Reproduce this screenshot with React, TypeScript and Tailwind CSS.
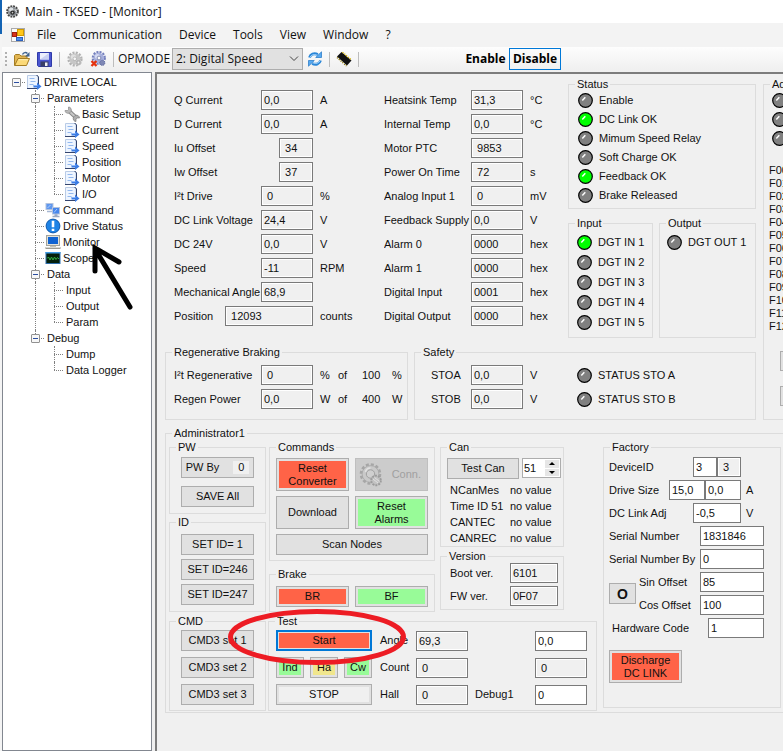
import React, { useId } from "react";
import clsx from "clsx";

/* ---------- Icons ---------- */

const GearIcon = () => (
  <svg viewBox="0 0 16 16" className="h-4 w-4" aria-hidden="true">
    <circle cx="8" cy="8" r="6.300" fill="none" stroke="#b2b2b2" strokeWidth="2.600" strokeDasharray="2 1.300" />
    <circle cx="8" cy="8" r="5.600" fill="#c6c6c6" />
    <circle cx="6.500" cy="6" r="2.600" fill="#e0e0e0" />
    <circle cx="7.800" cy="7.800" r="1.800" fill="#f6f6f6" stroke="#a8a8a8" strokeWidth="0.700" />
    <circle cx="11.500" cy="11.500" r="2.800" fill="#b4b4b4" stroke="#d8d8d8" strokeWidth="0.800" strokeDasharray="1.200 0.800" />
    <circle cx="11.500" cy="11.500" r="0.900" fill="#eee" />
  </svg>
);

const GearOffIcon = () => (
  <svg viewBox="0 0 16 16" className="h-4 w-4" aria-hidden="true">
    <circle cx="8.800" cy="7" r="5.900" fill="none" stroke="#7580bd" strokeWidth="2.400" strokeDasharray="2 1.090" />
    <circle cx="8.800" cy="7" r="5.200" fill="#a6afdc" />
    <circle cx="7.500" cy="5.500" r="2.600" fill="#d5daf2" />
    <circle cx="9" cy="7" r="1.900" fill="#fafafa" stroke="#5c6698" strokeWidth="0.700" />
    <circle cx="12.300" cy="11.800" r="2.600" fill="#7f88b5" stroke="#4f5a93" strokeWidth="0.800" strokeDasharray="1.200 0.800" />
    <path d="M1.500 10l5 5M6.500 10l-5 5" stroke="#e5320e" strokeWidth="2.300" />
  </svg>
);

const ConnGearIcon = () => (
  <svg viewBox="0 0 24 24" className="h-6 w-6" aria-hidden="true">
    <circle cx="11.500" cy="11" r="9.300" fill="none" stroke="#a6a6a6" strokeWidth="3" strokeDasharray="2.900 1.970" />
    <circle cx="11.500" cy="11" r="8.400" fill="#c9c9c9" stroke="#a6a6a6" strokeWidth="0.800" />
    <circle cx="11.500" cy="11" r="4.200" fill="#cfcfcf" stroke="#a0a0a0" />
    <path d="M6.500 9a5 5 0 0 1 5-4" fill="none" stroke="#e2e2e2" strokeWidth="1.500" />
    <circle cx="17" cy="17.500" r="4.800" fill="#c2c2c2" stroke="#9c9c9c" strokeWidth="2" strokeDasharray="2 1" />
    <path d="M14 16l5 4M15.500 14.500l5 4" stroke="#e0e0e0" />
  </svg>
);

const AppIcon = () => (
  <svg viewBox="0 0 14 14" className="h-[13px] w-[13px]" aria-hidden="true">
    <circle cx="7" cy="7" r="5.600" fill="none" stroke="#444" strokeWidth="2.400" strokeDasharray="2 0.930" />
    <circle cx="7" cy="7" r="5" fill="#8a8f94" />
    <circle cx="5.600" cy="5" r="2.400" fill="#dde1e4" />
    <circle cx="7" cy="8.200" r="2.400" fill="#2a2a2a" />
    <circle cx="7" cy="8.200" r="0.900" fill="#ccc" />
    <path d="M9.500 4.500l2 3" stroke="#e8e8e8" />
  </svg>
);

const FormIcon = () => (
  <svg viewBox="0 0 14 14" className="h-[14px] w-[14px]" aria-hidden="true">
    <rect x="0.500" y="0.500" width="13" height="13" fill="#fafafa" stroke="#a9a9a9" />
    <rect x="6.500" y="1.500" width="6" height="6" fill="#ffc61a" stroke="#d19a00" />
    <rect x="1.500" y="4.500" width="4" height="4" fill="#d8321c" stroke="#9e1f0e" />
    <rect x="5.500" y="9.500" width="6" height="3" fill="#4d8dea" stroke="#2a60bd" />
  </svg>
);

const FolderIcon = () => (
  <svg viewBox="0 0 16 16" className="h-4 w-4" aria-hidden="true">
    <path d="M0.500 14.500V4.500l1-1h4l1.500 1.500h6V8" fill="#e2b552" stroke="#a47c22" />
    <path d="M0.700 14.500L4 7.500h11.500L12.500 14.500z" fill="#fbd978" stroke="#a47c22" />
    <path d="M4.800 8.700h9" stroke="#fff0b8" />
    <path d="M8.500 3.500C9.500 1.200 12 1 13.500 2.500" fill="none" stroke="#3f6390" strokeWidth="1.400" />
    <path d="M15.500 1v4.500h-4.500z" fill="#3f6390" />
  </svg>
);

const SaveIcon = () => (
  <svg viewBox="0 0 15 15" className="h-[15px] w-[15px]" aria-hidden="true">
    <path d="M0.500 0.500h14v14h-13l-1-1z" fill="#4a55cf" stroke="#2f3aa8" />
    <rect x="3" y="1" width="9" height="6.500" fill="#eceffc" />
    <path d="M3 7.500L12 1v6.500z" fill="#c9d0f2" />
    <rect x="3.500" y="9.500" width="8" height="5" fill="#3a3f66" />
    <rect x="8" y="10.500" width="2.500" height="3.500" fill="#f0f0f5" />
  </svg>
);

const RefreshIcon = () => (
  <svg viewBox="0 0 16 16" className="h-4 w-4" aria-hidden="true">
    <path d="M2.500 6.500C3.300 3.400 7 1.600 10.800 3.600" fill="none" stroke="#2b87d8" strokeWidth="2.800" />
    <path d="M14.500 0.800v5.700H8.700z" fill="#57aaf2" stroke="#1f74c4" strokeWidth="0.700" />
    <path d="M13.500 9.500C12.700 12.600 9 14.400 5.200 12.400" fill="none" stroke="#2b87d8" strokeWidth="2.800" />
    <path d="M1.500 15.200V9.500h5.800z" fill="#57aaf2" stroke="#1f74c4" strokeWidth="0.700" />
    <path d="M3.200 6C4.200 3.900 7 3 9.800 4M12.800 10c-1 2.100-3.800 3-6.600 2" fill="none" stroke="#b4dcff" strokeWidth="0.900" />
  </svg>
);

const ChipIcon = () => (
  <svg viewBox="0 0 16 16" className="h-4 w-4" aria-hidden="true">
    <path d="M1 5.500L5.500 1l10 8.500L11 14.500z" fill="#111" />
    <path d="M6.500 1.200l9 7.800" stroke="#d8b400" strokeWidth="1.400" strokeDasharray="1.200 1.200" />
    <path d="M1 6.500l9.500 8.500" stroke="#8f7a10" strokeWidth="1.400" strokeDasharray="1.200 1.200" />
  </svg>
);

const PageIcon = () => (
  <svg viewBox="0 0 16 16" className="h-4 w-4" aria-hidden="true">
    <path d="M1.500 1.500h9l1.500 1.500v11.500h-10.500z" fill="#eef5ff" stroke="#b9cbe6" />
    <path d="M10.500 1.500h1l1 1.500v11" fill="none" stroke="#33446e" />
    <path d="M1 14.500h11" stroke="#33446e" />
    <path d="M3.500 4.500h5M4.500 7.500h5M3.500 10.500h4" stroke="#93b8ee" />
    <path d="M7.500 11h3.500V8.500l4.500 4-4.500 3.500v-2.500h-3.500z" fill="#3c7ce4" />
    <path d="M8 11.500h3.500" stroke="#8db8fa" />
  </svg>
);

const WrenchIcon = () => (
  <svg viewBox="0 0 16 16" className="h-4 w-4" aria-hidden="true">
    <path d="M5 5l7 6.500" stroke="#8a8a8a" strokeWidth="4" />
    <path d="M5 5l7 6.500" stroke="#c8c8c8" strokeWidth="2" />
    <path d="M1 4.500c0 2 2 3.500 4.500 2.500L7 5.500C8 3 6.500 1 4.500 1v2.500L3.500 4.500z" fill="#b9b9b9" stroke="#8a8a8a" strokeWidth="0.700" />
    <path d="M15.500 12c0-2-2-3.500-4.500-2.500l-1.500 1.500c-1 2.500 .5 4.500 2.500 4.500v-2.500l1-1z" fill="#adadad" stroke="#7d7d7d" strokeWidth="0.700" />
  </svg>
);

const NetworkIcon = () => (
  <svg viewBox="0 0 16 16" className="h-4 w-4" aria-hidden="true">
    <rect x="1" y="1.500" width="7" height="6" fill="#5f97ee" stroke="#b3c3de" />
    <path d="M2 9.500h5" stroke="#a7b7d2" strokeWidth="1.500" />
    <rect x="7.500" y="5.500" width="7" height="6.500" fill="#4686ec" stroke="#b3c3de" />
    <path d="M9.500 13h3M7.500 14.500h7" stroke="#9aa9c4" strokeWidth="1.500" />
    <path d="M2.500 6l3-3M9 10.500l3-3.500" stroke="#a9cbff" />
  </svg>
);

const StatusIcon = () => (
  <svg viewBox="0 0 16 16" className="h-4 w-4" aria-hidden="true">
    <circle cx="8" cy="8" r="6.900" fill="#1e83e6" stroke="#1059ad" />
    <path d="M6.700 2.800h2.600v6.400H6.700zM6.700 10.800h2.600v2.300H6.700z" fill="#fff" />
  </svg>
);

const MonitorIcon = () => (
  <svg viewBox="0 0 16 16" className="h-4 w-4" aria-hidden="true">
    <rect x="1.500" y="1.500" width="13" height="10" fill="#e2e2da" stroke="#a3a39b" />
    <rect x="3" y="3" width="10" height="7" fill="#0f63d2" />
    <path d="M5 12.500h6" stroke="#c2c2ba" />
    <path d="M0.500 14h15" stroke="#9b9b94" strokeWidth="2" />
    <path d="M1 13.500h14" stroke="#d9d9d2" />
  </svg>
);

const ScopeIcon = () => (
  <svg viewBox="0 0 16 16" className="h-4 w-4" aria-hidden="true">
    <rect x="1" y="2.500" width="14" height="11" fill="#04200c" stroke="#2f6fae" />
    <rect x="0.500" y="2" width="15" height="1.500" fill="#3f9be6" />
    <path d="M2 8.500l1.500-1.500 1.500 3 1.500-3 1.500 3 1.500-3 1.500 2.500 1.500-2 1.500 1.500" fill="none" stroke="#2fae42" />
  </svg>
);

const Led = ({ on = false }: { on?: boolean }) => (
  <svg viewBox="0 0 15 15" className="h-[15px] w-[15px] shrink-0" aria-hidden="true">
    <circle cx="7.500" cy="7.500" r="6.800" fill={on ? "#00ff00" : "#808080"} stroke="#000" strokeWidth="1.200" />
    <path d="M4.300 7.500l3-3.200" stroke="#fff" strokeWidth="1.500" />
  </svg>
);

/* ---------- Building blocks ---------- */

type GroupProps = { title: string; className?: string; body?: string; children?: React.ReactNode };

const Group = ({ title, className, body, children }: GroupProps) => (
  <fieldset className={clsx("min-w-0 border border-[#dcdcdc]", className)}>
    <legend className="ml-1.5 px-0.5 leading-[14px] whitespace-nowrap">{title}</legend>
    <div className={body}>{children}</div>
  </fieldset>
);

type BoxProps = { id?: string; value: string; className?: string; editable?: boolean; label?: string };

const Box = ({ id, value, className = "w-[52px]", editable = false, label }: BoxProps) => (
  <input
    id={id}
    aria-label={label}
    defaultValue={value}
    readOnly={!editable}
    className={clsx(
      "h-5 shrink-0 border border-[#7a7a7a] px-0.5 outline-none shadow-[inset_0_0_0_1px_#fff]",
      editable ? "bg-white" : "bg-[#f0f0f0]",
      className
    )}
  />
);

type BtnProps = { children?: React.ReactNode; className?: string; fill?: string; focused?: boolean };

const Btn = ({ children, className = "h-[21px]", fill, focused = false }: BtnProps) => (
  <button
    type="button"
    className={clsx(
      "flex items-stretch bg-[#e1e1e1] leading-[13px]",
      focused ? "border-2 border-[#0078d7] p-px" : "border border-[#adadad] p-0.5",
      className
    )}
  >
    <span className={clsx("flex flex-1 items-center justify-center whitespace-nowrap", fill)}>{children}</span>
  </button>
);

type Reading = { label: string; value: string; unit?: string; box?: string };

const ReadingRow = ({ label, value, unit, box }: Reading) => {
  const id = useId();
  return (
    <div className="flex h-6 items-center">
      <div className="flex w-[139px] items-center">
        <label htmlFor={id} className="flex-1 overflow-hidden whitespace-nowrap">{label}</label>
        <Box id={id} value={value} className={box} />
      </div>
      <span className="ml-[7px]">{unit}</span>
    </div>
  );
};

const LedRow = ({ label, on, className = "h-5" }: { label?: string; on?: boolean; className?: string }) => (
  <div className={clsx("flex items-center gap-1.5 whitespace-nowrap", className)}>
    <Led on={on} />
    <span>{label}</span>
  </div>
);

/* ---------- Data ---------- */

const motorReadings: Reading[] = [
  { label: "Q Current", value: "0,0", unit: "A" },
  { label: "D Current", value: "0,0", unit: "A" },
  { label: "Iu Offset", value: " 34", box: "w-[34px]" },
  { label: "Iw Offset", value: " 37", box: "w-[34px]" },
  { label: "I²t Drive", value: " 0", unit: "%" },
  { label: "DC Link Voltage", value: "24,4", unit: "V" },
  { label: "DC 24V", value: "0,0", unit: "V" },
  { label: "Speed", value: "-11", unit: "RPM" },
  { label: "Mechanical Angle", value: "68,9" },
  { label: "Position", value: " 12093", unit: "counts", box: "w-[88px]" },
];

const systemReadings: Reading[] = [
  { label: "Heatsink Temp", value: "31,3", unit: "°C" },
  { label: "Internal Temp", value: "0,0", unit: "°C" },
  { label: "Motor PTC", value: " 9853" },
  { label: "Power On Time", value: " 72", unit: "s" },
  { label: "Analog Input 1", value: " 0", unit: "mV" },
  { label: "Feedback Supply V", value: "0,0", unit: "V" },
  { label: "Alarm 0", value: "0000", unit: "hex" },
  { label: "Alarm 1", value: "0000", unit: "hex" },
  { label: "Digital Input", value: "0001", unit: "hex" },
  { label: "Digital Output", value: "0000", unit: "hex" },
];

const statusLeds = [
  { label: "Enable", on: false },
  { label: "DC Link OK", on: true },
  { label: "Mimum Speed Relay", on: false },
  { label: "Soft Charge OK", on: false },
  { label: "Feedback OK", on: true },
  { label: "Brake Released", on: false },
];

const faults = ["F00", "F01", "F02", "F03", "F04", "F05", "F06", "F07", "F08", "F09", "F10", "F11", "F12"];

type TreeNode = { text: string; guides: string; icon?: React.ReactNode };

// One guide character per level: "|" line, "+" branch, "L" last branch,
// "-" toggle, "e" last toggle, "r" root toggle
const tree: TreeNode[] = [
  { text: "DRIVE LOCAL", guides: "r", icon: <PageIcon /> },
  { text: "Parameters", guides: " -" },
  { text: "Basic Setup", guides: " |+", icon: <WrenchIcon /> },
  { text: "Current", guides: " |+", icon: <PageIcon /> },
  { text: "Speed", guides: " |+", icon: <PageIcon /> },
  { text: "Position", guides: " |+", icon: <PageIcon /> },
  { text: "Motor", guides: " |+", icon: <PageIcon /> },
  { text: "I/O", guides: " |L", icon: <PageIcon /> },
  { text: "Command", guides: " +", icon: <NetworkIcon /> },
  { text: "Drive Status", guides: " +", icon: <StatusIcon /> },
  { text: "Monitor", guides: " +", icon: <MonitorIcon /> },
  { text: "Scope", guides: " +", icon: <ScopeIcon /> },
  { text: "Data", guides: " -" },
  { text: "Input", guides: " |+" },
  { text: "Output", guides: " |+" },
  { text: "Param", guides: " |L" },
  { text: "Debug", guides: " e" },
  { text: "Dump", guides: "  +" },
  { text: "Data Logger", guides: "  L" },
];

/* ---------- Tree ---------- */

const Guide = ({ kind }: { kind: string }) => {
  const toggle = kind === "-" || kind === "e" || kind === "r";
  const through = kind === "|" || kind === "+" || kind === "-";
  const half = kind === "L" || kind === "e";
  return (
    <span className="relative h-4 w-[19px] shrink-0">
      {through && <span className="absolute left-[9px] top-0 h-4 border-l border-dotted border-[#808080]" />}
      {half && <span className="absolute left-[9px] top-0 h-2 border-l border-dotted border-[#808080]" />}
      {kind !== "|" && kind !== " " && (
        <span className="absolute left-[9px] top-2 w-[9px] border-t border-dotted border-[#808080]" />
      )}
      {toggle && (
        <button type="button" aria-label="Collapse" className="absolute left-[5px] top-1 flex h-[9px] w-[9px] items-center justify-center rounded-[1px] border border-[#919191] bg-[#f7f7f7]">
          <span className="h-px w-[5px] bg-[#2b4ea0]" />
        </button>
      )}
    </span>
  );
};

const TreeView = () => (
  <nav className="w-[150px] shrink-0 border border-[#828790] bg-white pt-px pl-1">
    <ul>
      {tree.map((node) => (
        <li key={node.text} className="flex h-4 items-center leading-4 whitespace-nowrap">
          {node.guides.split("").map((kind, i) => (
            <Guide key={i} kind={kind} />
          ))}
          {node.icon}
          <span className="ml-0.5">{node.text}</span>
        </li>
      ))}
    </ul>
  </nav>
);

/* ---------- Header ---------- */

const Separator = () => <span className="h-[15px] w-px bg-[#bdbdbd]" />;

const Header = () => (
  <header className="font-['Open_Sans','Noto_Sans',sans-serif] text-xs text-[#111]">
    <div className="flex h-[23px] items-center gap-1.5 bg-white pl-1">
      <AppIcon />
      <span>Main - TKSED - [Monitor]</span>
    </div>
    <nav className="flex h-6 items-center gap-3 bg-[#f3f3f3] pl-[9px]">
      <FormIcon />
      <div className="flex items-center gap-[17px]">
        {["File", "Communication", "Device", "Tools", "View", "Window", "?"].map((item) => (
          <button type="button" key={item}>{item}</button>
        ))}
      </div>
    </nav>
    <div className="flex h-6 items-center bg-gradient-to-b from-[#fdfdfd] to-[#efefef] pl-[3px]">
      <span className="mr-[7px] h-[14px] border-l-2 border-dotted border-[#b0b0b0]" />
      <div className="flex items-center gap-[7px]">
        <button type="button" aria-label="Open"><FolderIcon /></button>
        <button type="button" aria-label="Save"><SaveIcon /></button>
        <Separator />
        <button type="button" aria-label="Connect"><GearIcon /></button>
        <button type="button" aria-label="Disconnect"><GearOffIcon /></button>
        <Separator />
      </div>
      <label htmlFor="opmode" className="ml-1 w-[54px]">OPMODE</label>
      <div className="relative">
        <select id="opmode" className="h-[22px] w-[131px] appearance-none border border-[#adadad] bg-[#e1e1e1] pl-[3px]">
          <option>2: Digital Speed</option>
        </select>
        <svg viewBox="0 0 10 6" className="pointer-events-none absolute top-2 right-1 h-1.5 w-2.5" aria-hidden="true">
          <path d="M1 0.500l4 4 4-4" fill="none" stroke="#444" />
        </svg>
      </div>
      <div className="ml-1 flex items-center gap-1.5">
        <button type="button" aria-label="Refresh"><RefreshIcon /></button>
        <Separator />
        <button type="button" aria-label="Firmware"><ChipIcon /></button>
        <Separator />
      </div>
      <div className="ml-[103px] flex items-center font-bold text-black">
        <button type="button" className="h-[22px] w-[47px] text-center">Enable</button>
        <button type="button" className="h-[22px] w-[52px] border border-[#0078d7] text-center">Disable</button>
      </div>
    </div>
  </header>
);

/* ---------- Monitor groups ---------- */

const Braking = () => (
  <Group title="Regenerative Braking" className="w-[243px]" body="pt-1 pr-1 pb-2 pl-2">
    {[
      { label: "I²t Regenerative", value: " 0", unit: "%", max: "100" },
      { label: "Regen Power", value: "0,0", unit: "W", max: "400" },
    ].map((r) => (
      <div key={r.label} className="flex items-center">
        <div className="w-[164px]"><ReadingRow label={r.label} value={r.value} unit={r.unit} /></div>
        <span className="w-6">of</span>
        <span className="w-[30px]">{r.max}</span>
        <span>{r.unit}</span>
      </div>
    ))}
  </Group>
);

const Safety = () => (
  <Group title="Safety" className="flex-1" body="pt-1 pb-2 pl-4">
    {["A", "B"].map((ch) => (
      <div key={ch} className="flex h-6 items-center">
        <label htmlFor={"sto" + ch} className="w-10">STO{ch}</label>
        <Box id={"sto" + ch} value="0,0" />
        <span className="ml-[7px] w-[47px]">V</span>
        <LedRow label={"STATUS STO " + ch} />
      </div>
    ))}
  </Group>
);

const NodeSpinner = () => (
  <div className="flex h-5 w-[39px] border border-[#adadad] bg-white p-px">
    <input aria-label="Node" defaultValue="51" className="min-w-0 flex-1 outline-none" />
    <div className="flex w-[14px] flex-col gap-px">
      <button type="button" aria-label="Up" className="flex flex-1 items-center justify-center bg-[#e6e6e6]">
        <svg viewBox="0 0 6 3" className="h-[3px] w-1.5"><path d="M0 3l3-3 3 3z" /></svg>
      </button>
      <button type="button" aria-label="Down" className="flex flex-1 items-center justify-center bg-[#e6e6e6]">
        <svg viewBox="0 0 6 3" className="h-[3px] w-1.5"><path d="M0 0l3 3 3-3z" /></svg>
      </button>
    </div>
  </div>
);

const Factory = () => (
  <Group title="Factory" className="w-[178px]" body="pt-[3px] pr-4 pb-6 pl-[5px]">
    <div className="flex flex-col gap-[3px] whitespace-nowrap">
      <div className="flex items-center">
        <label htmlFor="device" className="w-[84px]">DeviceID</label>
        <Box id="device" value="3" editable className="w-6" />
        <Box value=" 3" className="w-6" label="DeviceID read" />
      </div>
      <div className="flex items-center">
        <label htmlFor="size" className="w-[60px]">Drive Size</label>
        <Box id="size" value="15,0" editable className="w-9" />
        <Box value="0,0" editable className="w-9" label="Drive Size limit" />
        <span className="ml-[5px]">A</span>
      </div>
      <div className="flex items-center">
        <label htmlFor="adj" className="w-[84px]">DC Link Adj</label>
        <Box id="adj" value="-0,5" editable className="w-12" />
        <span className="ml-[5px]">V</span>
      </div>
      <div className="flex items-center justify-between">
        <label htmlFor="sn">Serial Number</label>
        <Box id="sn" value="1831846" editable className="w-16" />
      </div>
      <div className="flex items-center justify-between">
        <label htmlFor="snby">Serial Number By</label>
        <Box id="snby" value="0" editable className="w-16" />
      </div>
      <div className="flex items-center gap-[3px]">
        <button type="button" className="h-[21px] w-[27px] border border-[#adadad] bg-[#e1e1e1] text-center text-sm leading-[18px] font-bold">O</button>
        <div className="flex flex-1 flex-col gap-[3px]">
          <div className="flex items-center justify-between">
            <label htmlFor="sin">Sin Offset</label>
            <Box id="sin" value="85" editable className="w-16" />
          </div>
          <div className="flex items-center justify-between">
            <label htmlFor="cos">Cos Offset</label>
            <Box id="cos" value="100" editable className="w-16" />
          </div>
        </div>
      </div>
      <div className="flex items-center justify-between pl-[3px]">
        <label htmlFor="hw">Hardware Code</label>
        <Box id="hw" value="1" editable className="w-14" />
      </div>
    </div>
    <Btn className="mt-3 h-[33px] w-[73px]" fill="bg-[#ff6347]">Discharge<br />DC LINK</Btn>
  </Group>
);

const Administrator = () => (
  <Group title="Administrator1" className="mt-1.5" body="flex items-start gap-1.5 pb-px pl-[3px]">
    <div className="flex w-[428px] flex-col gap-0.5">
      <div className="flex items-start">
        <div className="flex w-[97px] flex-col gap-px">
          <Group title="PW" body="flex flex-col gap-2 px-[11px] pt-[3px] pb-1.5">
            <Btn>
              PW By
              <span className="ml-3.5 w-4 bg-[#f0f0f0]">0</span>
            </Btn>
            <Btn>SAVE All</Btn>
          </Group>
          <Group title="ID" body="flex flex-col gap-1 px-[11px] pt-[5px] pb-1.5">
            <Btn>SET ID= 1</Btn>
            <Btn>SET ID=246</Btn>
            <Btn>SET ID=247</Btn>
          </Group>
        </div>
        <div className="ml-[3px] flex w-[166px] flex-col gap-1.5">
          <Group title="Commands" body="grid grid-cols-2 gap-x-1.5 gap-y-[5px] px-1.5 pt-1 pb-[5px]">
            <Btn className="h-[33px]" fill="bg-[#ff6347]">Reset<br />Converter</Btn>
            <button type="button" disabled className="flex h-[33px] items-center justify-between border border-[#bfbfbf] bg-[#cccccc] pr-1.5 pl-[3px] text-[#a0a0a0]">
              <ConnGearIcon />
              Conn.
            </button>
            <Btn className="h-[33px]">Download</Btn>
            <Btn className="h-[33px]" fill="bg-[#98fb98]">Reset<br />Alarms</Btn>
            <Btn className="col-span-2 h-[21px]">Scan Nodes</Btn>
          </Group>
          <Group title="Brake" body="grid grid-cols-2 gap-x-1.5 px-1.5 pt-[5px] pb-1">
            <Btn fill="bg-[#ff6347]">BR</Btn>
            <Btn fill="bg-[#98fb98]">BF</Btn>
          </Group>
        </div>
        <div className="ml-[5px] flex w-[124px] flex-col gap-0.5">
          <Group title="Can" body="pt-1 pl-1.5">
            <div className="mb-[3px] flex items-start gap-[3px]">
              <Btn className="h-[21px] w-[72px]">Test Can</Btn>
              <NodeSpinner />
            </div>
            <dl className="grid grid-cols-[60px_auto] pl-[3px] leading-4">
              {["NCanMes", "Time ID 51", "CANTEC", "CANREC"].map((name) => (
                <React.Fragment key={name}>
                  <dt className="whitespace-nowrap">{name}</dt>
                  <dd>no value</dd>
                </React.Fragment>
              ))}
            </dl>
          </Group>
          <Group title="Version" body="flex flex-col gap-[3px] pr-[5px] pb-[3px] pl-[9px]">
            <div className="flex items-center justify-between">
              <label htmlFor="boot">Boot ver.</label>
              <Box id="boot" value="6101" className="w-12" />
            </div>
            <div className="flex items-center justify-between">
              <label htmlFor="fw">FW ver.</label>
              <Box id="fw" value="0F07" className="w-12" />
            </div>
          </Group>
        </div>
      </div>
      <div className="flex items-start gap-0.5">
        <Group title="CMD" className="w-[97px]" body="flex flex-col gap-1.5 px-[11px] pt-0.5 pb-[5px]">
          <Btn>CMD3 set 1</Btn>
          <Btn>CMD3 set 2</Btn>
          <Btn>CMD3 set 3</Btn>
        </Group>
        <Group
          title="Test"
          className="flex-1"
          body="grid grid-cols-[96px_8px_36px_52px_7px_60px_52px] items-center gap-y-1.5 px-[7px] pt-0.5 pb-[5px]"
        >
          <Btn className="col-span-2 mr-2 h-[21px]" fill="bg-[#ff6347]" focused>Start</Btn>
          <label htmlFor="angle">Angle</label>
          <Box id="angle" value="69,3" />
          <span className="col-span-2" />
          <Box value="0,0" editable label="Angle set" />

          <div className="col-span-2 mr-2 grid grid-cols-3 gap-1.5">
            <Btn fill="bg-[#98fb98]">Ind</Btn>
            <Btn fill="bg-[#f0e68c]">Ha</Btn>
            <Btn fill="bg-[#98fb98]">Cw</Btn>
          </div>
          <label htmlFor="count">Count</label>
          <Box id="count" value=" 0" />
          <span className="col-span-2" />
          <Box value=" 0" label="Count set" />

          <Btn className="col-span-2 mr-2 h-[21px]" fill="bg-[#f0f0f0]">STOP</Btn>
          <label htmlFor="hall">Hall</label>
          <Box id="hall" value=" 0" />
          <label htmlFor="debug1" className="col-span-2 pl-[7px]">Debug1</label>
          <Box id="debug1" value="0" editable />
        </Group>
      </div>
    </div>
    <Factory />
  </Group>
);

const MonitorPanel = () => (
  <main className="min-w-0 flex-1 overflow-hidden border-t-2 border-l-2 border-[#7c7c7c] bg-[#f0f0f0] pt-[3px] pl-2">
    <div className="w-max min-w-full">
      <div className="flex items-stretch gap-[7px]">
        <div className="flex w-[591px] flex-col gap-[7px]">
          <div className="flex items-start">
            <div className="w-[219px] pt-[11px] pl-[9px]">
              {motorReadings.map((r) => <ReadingRow key={r.label} {...r} />)}
            </div>
            <div className="w-[184px] pt-[11px]">
              {systemReadings.map((r) => <ReadingRow key={r.label} {...r} />)}
            </div>
            <div className="flex flex-1 flex-col gap-[7px]">
              <Group title="Status" body="pb-[3px] pl-[9px]">
                {statusLeds.map((s) => <LedRow key={s.label} {...s} className="h-[19px]" />)}
              </Group>
              <div className="flex gap-1.5">
                <Group title="Input" className="w-[85px]" body="pt-0.5 pb-[5px] pl-2">
                  {[1, 2, 3, 4, 5].map((n) => <LedRow key={n} label={"DGT IN " + n} on={n === 1} />)}
                </Group>
                <Group title="Output" className="flex-1" body="pt-0.5 pl-[7px]">
                  <LedRow label="DGT OUT 1" />
                </Group>
              </div>
            </div>
          </div>
          <div className="flex gap-1.5">
            <Braking />
            <Safety />
          </div>
        </div>
        <Group title="Ad" className="w-[120px]">
          <div className="pl-2">
            {[0, 1, 2].map((n) => <LedRow key={n} className="h-[19px]" />)}
          </div>
          <ul className="mt-4 pl-[5px] leading-[13px]">
            {faults.map((f) => <li key={f}>{f}</li>)}
          </ul>
          <div className="mt-[18px] flex flex-col gap-[15px] pl-4">
            <Btn className="h-5 w-[73px]" />
            <Btn className="h-5 w-[73px]" />
          </div>
        </Group>
      </div>
      <Administrator />
    </div>
  </main>
);

// Hand-drawn marks over the Monitor node and the Start button
const Annotations = () => (
  <>
    <svg viewBox="0 0 46 68" className="pointer-events-none absolute top-[243px] left-[90px] h-[68px] w-[46px]" aria-hidden="true">
      <path d="M5 6l35 58M5 28V5l24 14" fill="none" stroke="#000" strokeWidth="5" strokeLinecap="round" />
    </svg>
    <svg viewBox="0 0 180 58" className="pointer-events-none absolute top-[608px] left-[227px] h-[58px] w-[180px]" aria-hidden="true">
      <ellipse cx="90" cy="29" rx="86.500" ry="25.500" fill="none" stroke="#ed1c24" strokeWidth="5" />
    </svg>
  </>
);

const App = () => (
  <div className="relative flex min-h-screen overflow-hidden bg-[#f0f0f0] font-['Liberation_Sans',Arial,sans-serif] text-[11px] text-[#111]">
    <div className="w-0.5 shrink-0 bg-[#f4f4f4]">
      <div className="h-[34px] bg-[#1464b4]" />
    </div>
    <div className="flex min-w-0 flex-1 flex-col">
      <Header />
      <div className="flex flex-1 gap-[3px] pt-px">
        <TreeView />
        <MonitorPanel />
      </div>
    </div>
    <Annotations />
  </div>
);

export default App;
